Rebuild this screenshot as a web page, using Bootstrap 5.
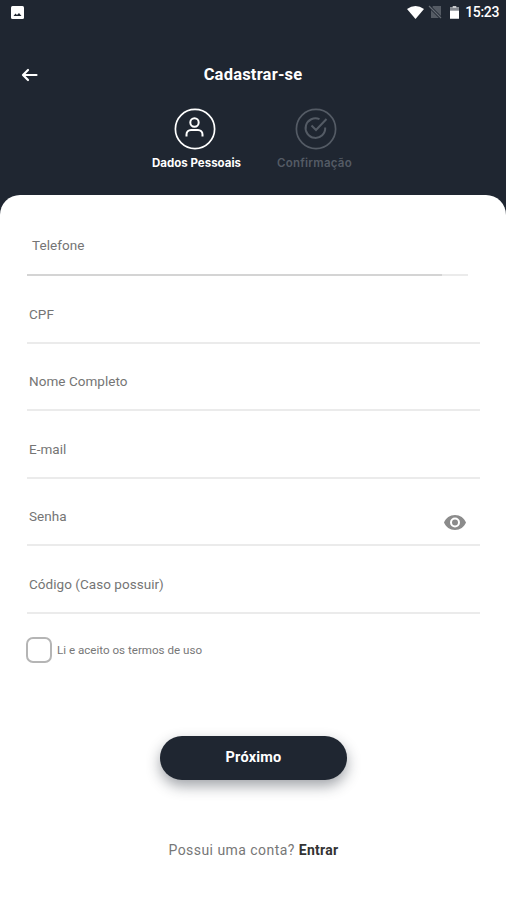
<!DOCTYPE html>
<html lang="pt-BR">
<head>
<meta charset="utf-8">
<meta name="viewport" content="width=device-width, initial-scale=1">
<title>Cadastrar-se</title>
<link href="https://cdn.jsdelivr.net/npm/bootstrap@5.3.0/dist/css/bootstrap.min.css" rel="stylesheet">
<style>
  body { font-family: Roboto, "Liberation Sans", sans-serif; background: #1f2631; width: 100%; height: 900px; overflow: hidden; }
  svg { display: block; flex: none; }
  .status-bar { height: 24px; padding: 0 7px 0 11px; }
  .clock { font-size: 14px; font-weight: 500; line-height: 24px; letter-spacing: -.35px; padding-left: 6px; }
  .title-row { height: 32px; margin-top: 34px; padding: 1px 21px 0; }
  .title-row h1 { font-size: 16.5px; font-weight: 700; line-height: 32px; letter-spacing: .2px; }
  .title-side { width: 17px; }
  .steps { height: 105px; padding: 18px 0 0 5px; }
  .step-item { width: 121px; color: #fff; }
  .step-item.pending { color: #545b65; }
  .step-name { font-family: Inter, Roboto, sans-serif; font-size: 11.5px; font-weight: 700; line-height: 14px; margin-top: 6px; padding-left: 3px; white-space: nowrap; letter-spacing: 0; }
  .step-item.pending .step-name { font-weight: 600; padding: 0 3px 0 0; letter-spacing: .25px; }
  .sheet { height: 705px; border-radius: 20px 20px 0 0; padding: 13px 26px 0 27px; }
  .field { height: 67.6px; padding: 0 14px 18px 2px; border-bottom: 2px solid #ebebeb; color: #757575; font-size: 13.5px; line-height: 20px; letter-spacing: .04px; }
  .field.phone { height: 68px; padding-left: 5px; padding-bottom: 19px; margin-right: 12px; border-image: linear-gradient(90deg, #d4d4d4 94%, #ebebeb 94%) 1; }
  .eye { margin-bottom: -4px; }
  .terms { margin: 23px 0 0 -1px; gap: 5px; }
  .terms .form-check-input { width: 26px; height: 26px; border: 2.5px solid #b5b5b5; border-radius: 7px; }
  .terms label { font-size: 11.6px; color: #777; line-height: 26px; }
  .btn-next { width: 187px; height: 44px; margin-top: 73px; background: #1f2631; color: #fff; font-size: 14.5px; font-weight: 700; line-height: 44px; letter-spacing: .2px; box-shadow: 0 6px 14px rgba(31,38,49,.42); }
  .btn-next:hover { background: #1f2631; color: #fff; }
  .login-line { font-size: 14px; line-height: 20px; margin-top: 60px; color: #777; letter-spacing: .45px; }
  .login-line a { color: #333; font-weight: 700; letter-spacing: .3px; }
</style>
</head>
<body>
<header class="text-white">
  <div class="status-bar d-flex align-items-center justify-content-between">
    <svg width="13" height="13" viewBox="0 0 13 13"><rect width="13" height="13" rx="1.5" fill="#fff"/><path d="M2.500 10l2-2.500 1.500 1.500L8 7l2.500 3z" fill="#1f2631"/></svg>
    <div class="d-flex align-items-center">
      <svg width="17" height="13" viewBox="0 0 17 13"><path d="M0 3Q8.500-3 17 3L8.500 13z" fill="#fff"/></svg>
      <svg class="ms-1" width="14" height="14" viewBox="0 0 14 14"><path d="M5 1h8v12H3V4z" fill="#555b64"/><path d="M1 1l12 12" stroke="#1f2631" stroke-width="3"/><path d="M1 1l12 12" stroke="#666c74" stroke-width="1.200"/></svg>
      <svg class="ms-2" width="9" height="13" viewBox="0 0 10 14"><path d="M3 0h4v1.500h3V14H0V1.500h3z" fill="#fff"/><path d="M0 1.500h10V5H0z" fill="#858990"/></svg>
      <span class="clock">15:23</span>
    </div>
  </div>
  <div class="title-row d-flex align-items-center justify-content-between">
    <svg class="title-side" width="17" height="14" viewBox="0 0 17 14" fill="none" stroke="#fff" stroke-width="2.200" stroke-linecap="round" stroke-linejoin="round"><path d="M7 2L2 7l5 5M2.500 7h13"/></svg>
    <h1 class="m-0">Cadastrar-se</h1>
    <span class="title-side"></span>
  </div>
  <div class="steps d-flex justify-content-center">
    <div class="step-item d-flex flex-column align-items-center">
      <svg width="42" height="42" viewBox="0 0 42 42" fill="none" stroke="currentColor" stroke-width="2"><circle cx="21" cy="21" r="19.600" stroke-width="1.700"/><circle cx="20.500" cy="14.500" r="4.200"/><path d="M12.500 28.500v-2A4.500 4.500 0 0 1 17 22h7a4.500 4.500 0 0 1 4.500 4.500v2"/></svg>
      <div class="step-name">Dados Pessoais</div>
    </div>
    <div class="step-item pending d-flex flex-column align-items-center">
      <svg width="42" height="42" viewBox="0 0 42 42" fill="none" stroke="currentColor" stroke-width="2"><circle cx="21" cy="21" r="19.600" stroke-width="1.700"/><path d="M24.500 11.200A9.800 9.800 0 1 0 30.200 19.500M16.500 17.500l4.500 4.500L31.500 11"/></svg>
      <div class="step-name">Confirmação</div>
    </div>
  </div>
</header>
<main class="sheet bg-white">
  <form>
    <div class="field phone d-flex align-items-end">Telefone</div>
    <div class="field d-flex align-items-end">CPF</div>
    <div class="field d-flex align-items-end">Nome Completo</div>
    <div class="field d-flex align-items-end">E-mail</div>
    <div class="field d-flex align-items-end justify-content-between">Senha
      <svg class="eye" width="22" height="15" viewBox="0 0 22 15"><path fill="#8b8b8b" fill-rule="evenodd" d="M11 0C6 0 1.700 3.100 0 7.500 1.700 11.900 6 15 11 15s9.300-3.100 11-7.500C20.300 3.100 16 0 11 0zm0 12.500a5 5 0 1 1 0-10 5 5 0 0 1 0 10zm0-2a3 3 0 1 0 0-6 3 3 0 0 0 0 6z"/></svg>
    </div>
    <div class="field d-flex align-items-end">Código (Caso possuir)</div>
    <div class="terms d-flex align-items-center">
      <input class="form-check-input m-0" type="checkbox" id="terms">
      <label for="terms">Li e aceito os termos de uso</label>
    </div>
    <button type="button" class="btn btn-next rounded-pill border-0 d-block mx-auto p-0">Próximo</button>
    <p class="login-line text-center mb-0">Possui uma conta? <a href="#" class="text-decoration-none">Entrar</a></p>
  </form>
</main>
<script src="https://cdn.jsdelivr.net/npm/bootstrap@5.3.0/dist/js/bootstrap.bundle.min.js"></script>
</body>
</html>
